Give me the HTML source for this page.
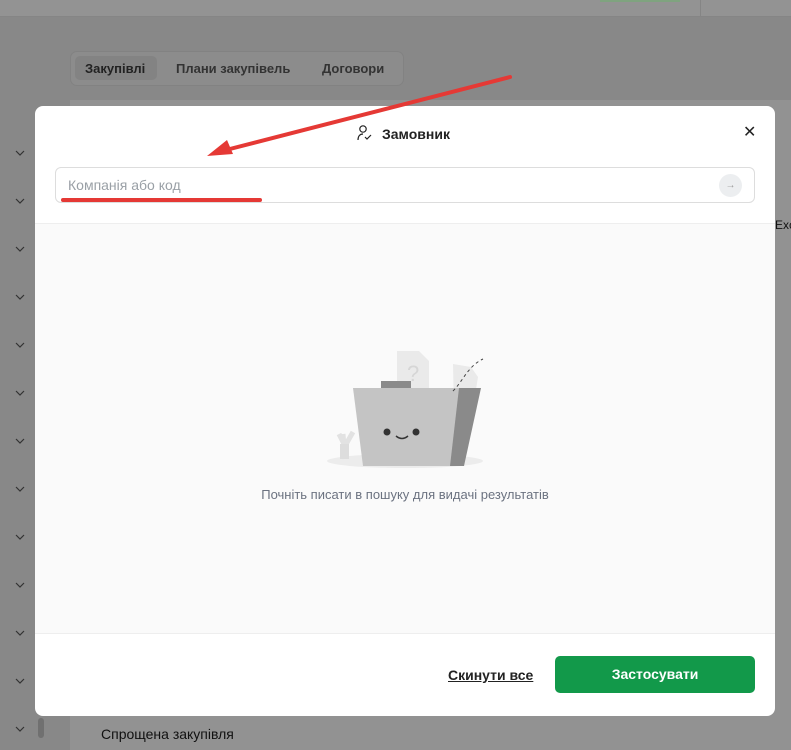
<!DOCTYPE html><html><head><meta charset="utf-8"><style>
body{margin:0;width:791px;height:750px;overflow:hidden;background:#888;font-family:"Liberation Sans",sans-serif;position:relative}
.a{position:absolute}
</style></head><body>
<div class="a" style="left:0;top:0;width:791px;height:16px;background:#939393;border-bottom:1px solid #858585"></div>
<div class="a" style="left:600px;top:0;width:80px;height:2px;background:#7fa37f"></div>
<div class="a" style="left:700px;top:0;width:1px;height:16px;background:#858585"></div>
<div class="a" style="left:70px;top:100px;width:721px;height:650px;background:#929292"></div>
<div class="a" style="left:38px;top:718px;width:6px;height:20px;background:#707070;border-radius:3px"></div>
<div class="a" style="left:70px;top:51px;width:332px;height:33px;border:1px solid #828282;border-radius:7px;background:#8c8c8c"></div>
<div class="a" style="left:75px;top:56px;width:82px;height:24px;background:#838383;border-radius:5px"></div>
<div class="a" style="left:85px;top:61px;font-size:13px;font-weight:bold;color:#222">Закупівлі</div>
<div class="a" style="left:176px;top:61px;font-size:13px;font-weight:bold;color:#333">Плани закупівель</div>
<div class="a" style="left:322px;top:61px;font-size:13px;font-weight:bold;color:#333">Договори</div>
<div class="a" style="left:101px;top:726px;font-size:14px;color:#111">Спрощена закупівля</div>
<div class="a" style="left:775px;top:218px;font-size:12px;color:#111">Exc</div>
<svg class="a" style="left:0;top:0" width="791" height="750">
<g fill="none" stroke="#333" stroke-width="1.2">
<path d="M16 151l4 4 4-4M16 199l4 4 4-4M16 247l4 4 4-4M16 295l4 4 4-4M16 343l4 4 4-4M16 391l4 4 4-4M16 439l4 4 4-4M16 487l4 4 4-4M16 535l4 4 4-4M16 583l4 4 4-4M16 631l4 4 4-4M16 679l4 4 4-4M16 727l4 4 4-4"/></g></svg>
<div class="a" style="left:35px;top:106px;width:740px;height:610px;background:#fff;border-radius:8px;overflow:hidden">
<div class="a" style="left:0;top:117px;width:740px;height:409px;background:#fafafa;border-top:1px solid #eee;border-bottom:1px solid #eee"></div>
<div class="a" style="left:20px;top:61px;width:698px;height:34px;border:1px solid #ddd;border-radius:6px;background:#fff"></div>
<div class="a" style="left:33px;top:71px;font-size:14px;color:#9aa0a6">Компанія або код</div>
<div class="a" style="left:684px;top:68px;width:23px;height:23px;border-radius:50%;background:#eceef0;color:#999;font-size:10px;text-align:center;line-height:23px">→</div>
<svg class="a" style="left:322px;top:18px" width="16" height="18"><circle cx="6" cy="5" r="3.2" fill="none" stroke="#222" stroke-width="1.2"/><path d="M1 16c0-4 2-6 5-6M8 13l2 2 4-4" fill="none" stroke="#222" stroke-width="1.2"/></svg>
<div class="a" style="left:347px;top:20px;font-size:14px;font-weight:bold;color:#222">Замовник</div>
<div class="a" style="left:708px;top:16px;font-size:16px;color:#222">✕</div>
<svg class="a" style="left:290px;top:245px" width="160" height="122">
<ellipse cx="80" cy="110" rx="78" ry="7" fill="#ececec"/>
<path d="M20 108l-2-25M20 95l-6-12M20 95l8-14" stroke="#e2e2e2" stroke-width="5" fill="none"/>
<rect x="15" y="93" width="9" height="15" fill="#ddd"/>
<path d="M72 0h22l10 10v40H72z" fill="#eaeaea"/>
<text x="82" y="30" font-size="22" fill="#d6d6d6" font-family="Liberation Sans">?</text>
<path d="M128 13l18 3 7 10-6 37-18-2z" fill="#eaeaea"/>
<rect x="56" y="30" width="30" height="10" fill="#8a8a8a"/>
<path d="M108 37h48l-17 78h-38z" fill="#8a8a8a"/>
<path d="M28 37h106l-9 78H38z" fill="#c4c4c4"/>
<path d="M128 40c10-10 15-25 30-32" stroke="#444" stroke-dasharray="3 3" fill="none"/>
<circle cx="62" cy="81" r="3.5" fill="#333"/><circle cx="91" cy="81" r="3.5" fill="#333"/>
<path d="M71 85q6 5 12 0" stroke="#333" stroke-width="1.5" fill="none"/>
</svg>
<div class="a" style="left:0;top:381px;width:740px;text-align:center;font-size:13px;color:#6b7280">Почніть писати в пошуку для видачі результатів</div>
<div class="a" style="left:413px;top:561px;font-size:14px;font-weight:bold;color:#222;text-decoration:underline">Скинути все</div>
<div class="a" style="left:520px;top:550px;width:200px;height:37px;background:#12994a;border-radius:5px;color:#fff;font-size:14px;font-weight:bold;text-align:center;line-height:37px">Застосувати</div>
</div>
<svg class="a" style="left:0;top:0" width="791" height="750">
<path d="M510 77L222 151" stroke="#e53935" stroke-width="4" stroke-linecap="round"/>
<path d="M207 156l20-16 6 14z" fill="#e53935"/>
<path d="M63 200H260" stroke="#e53935" stroke-width="4" stroke-linecap="round"/>
</svg>
</body></html>
